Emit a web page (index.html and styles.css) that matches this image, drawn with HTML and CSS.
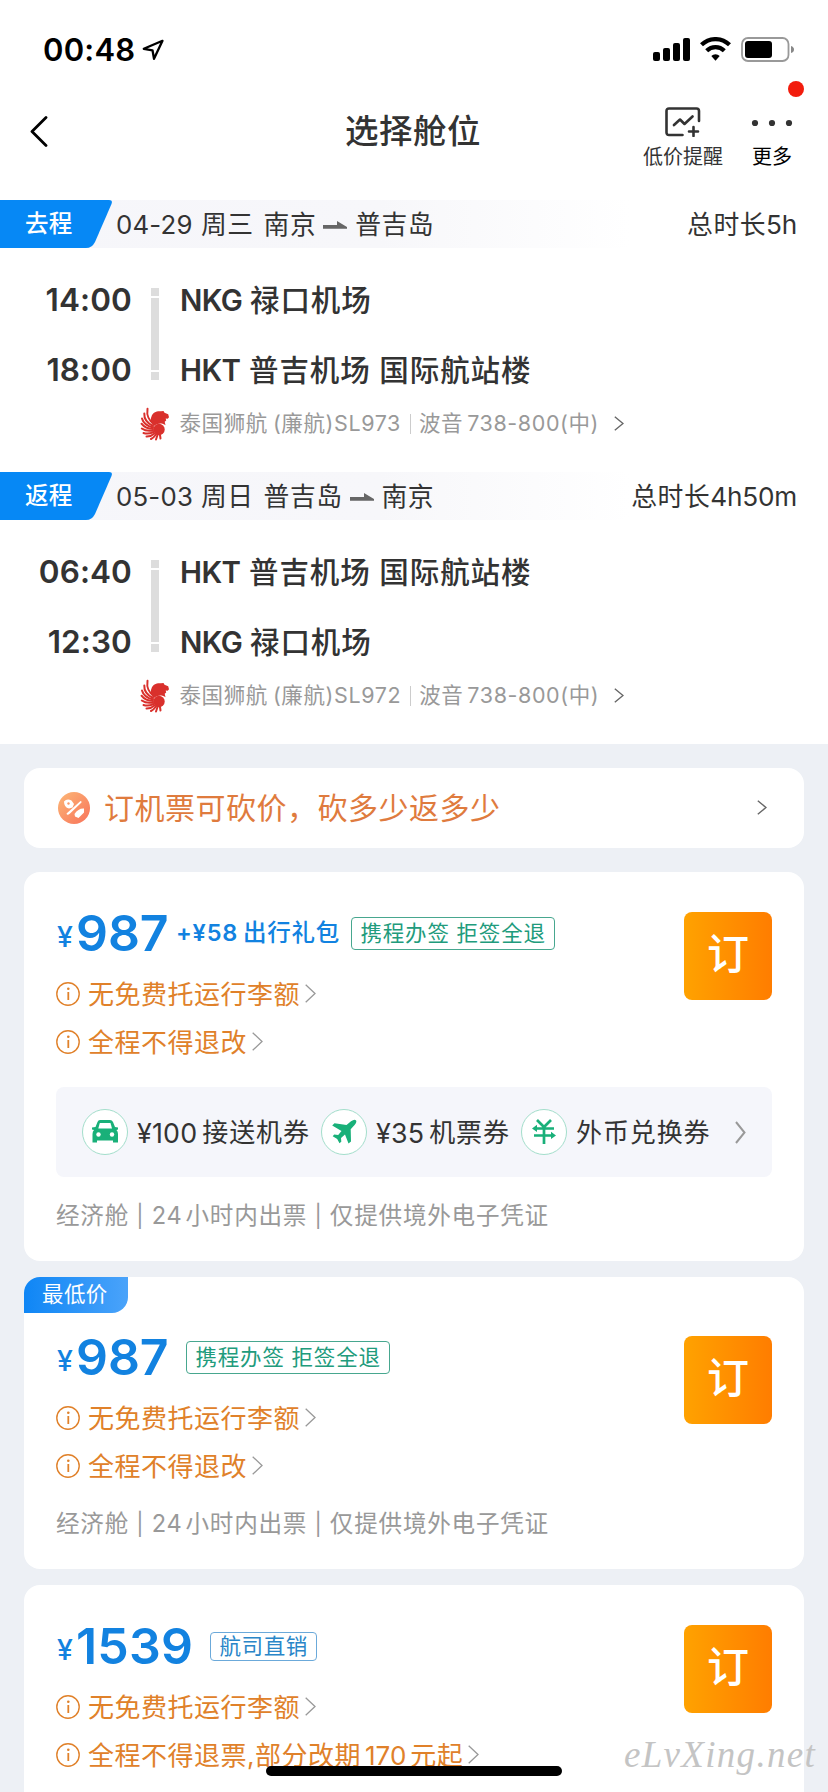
FILE: index.html
```html
<!DOCTYPE html>
<html lang="zh-CN">
<head>
<meta charset="utf-8">
<title>选择舱位</title>
<link rel="stylesheet" href="styles.css">
</head>
<body>
<svg class="defs" width="0" height="0" aria-hidden="true">
  <defs>
    <linearGradient id="peach" x1="0" y1="0" x2="1" y2="1"><stop offset="0" stop-color="#fcb877"/><stop offset="1" stop-color="#f8725a"/></linearGradient>
    <symbol id="info" viewBox="0 0 24 24"><circle cx="12" cy="12" r="11.2" fill="none" stroke="#e0812a" stroke-width="1.4"/><path d="M12.3 10v8" stroke="#e0812a" stroke-width="1.8"/><circle cx="12.3" cy="6.8" r="1.3" fill="#e0812a"/></symbol>
    <symbol id="more" viewBox="0 0 11 19"><path d="M.7.7 10 9.5.7 18.3" fill="none" stroke="#999" stroke-width="1.3"/></symbol>
    <symbol id="go" viewBox="0 0 10 15"><path d="M.8.8 9 7.5.8 14.2" fill="none" stroke="#666" stroke-width="1.4"/></symbol>
    <symbol id="arrow" viewBox="0 0 24 8"><path d="M0 4h14V0L24 6v1.8H0z" fill="#666"/></symbol>
    <symbol id="lion" viewBox="0 0 30 34">
      <g fill="none" stroke="#d9302c" stroke-width="2" stroke-linecap="round">
        <path d="M7.500 1.800C6.500 8 9 14 14 17"/><path d="M4.300 6.500C4 11 7 16 13 19"/><path d="M2 11.500C3 15.500 7 19 13 20.500"/><path d="M1.500 16.700C4 20 8 22 13 22"/><path d="M1.800 21.500C5 23.800 9 24.200 13 23.500"/><path d="M3.500 26C7 27.200 10 26.700 13.500 25"/><path d="M6.500 29.600C9.500 29.700 12 28.700 14.500 26.500"/><path d="M11 32C13 31 14.500 29.500 16 27.500"/><path d="M16 32.500 17.500 28M20.500 31.500 20 28"/>
      </g>
      <path d="M11.500 9.500C12.500 5.500 17 3.700 21 4.300l2.500-.3 1 1.700 3.700 1.500.8 3-1.300 1.500-2-.3.500 2-1.500 1.300.8 3.500c-3-2.500-8-2.500-11.500.8-3-2-4-6-2.500-9.500z" fill="#d9302c"/>
      <circle cx="19" cy="22.500" r="5.700" fill="#d9302c"/>
    </symbol>
  </defs>
</svg>
<div class="screen">
  <header class="status">
    <span class="clock">00:48</span>
    <svg class="loc" width="23" height="22" viewBox="0 0 23 22"><path d="M20.500 1.800 1.800 9.800 10.500 11.300 12 19.800z" fill="none" stroke="#000" stroke-width="2.300" stroke-linejoin="round"/></svg>
    <svg class="signals" width="142" height="26" viewBox="0 0 142 26">
      <rect x="0" y="15" width="7" height="9" rx="2"/><rect x="10" y="11" width="7" height="13" rx="2"/><rect x="20" y="6" width="7" height="18" rx="2"/><rect x="30" y="1" width="7" height="23" rx="2"/>
      <g fill="none" stroke="#000" stroke-width="4.200"><path d="M48.500 7.800a20 20 0 0 1 28 0"/><path d="M53.700 13.700a12.500 12.500 0 0 1 17.600 0"/></g><path d="M58.300 19a6 6 0 0 1 8.400 0l-4.200 4.700z"/>
      <rect x="89" y="1" width="46.500" height="23" rx="6" fill="none" stroke="#999" stroke-width="1.800"/><rect x="92" y="4" width="27" height="17" rx="3"/><path d="M138 9q3 1 3 3.500T138 16z" fill="#888"/>
    </svg>
  </header>

  <nav class="nav">
    <svg class="back" width="18" height="31" viewBox="0 0 18 31"><path d="M16 1.500 2 15.500 16 29.500" fill="none" stroke="#000" stroke-width="2.800" stroke-linecap="round" stroke-linejoin="round"/></svg>
    <h1 class="title">选择舱位</h1>
    <div class="tools">
      <div class="tool">
        <svg width="36" height="30" viewBox="0 0 36 30"><g fill="none" stroke="#333" stroke-width="2.600" stroke-linecap="round" stroke-linejoin="round"><path d="M17.500 28H4Q1.500 28 1.500 25.500V4Q1.500 1.500 4 1.500H31.500Q34 1.500 34 4V14"/><path d="M9 18 15 12.500 19.500 17 27.500 9.500M28.500 20v9M24 24.500h9"/></g></svg>
        <span>低价提醒</span>
      </div>
      <div class="tool tool-more">
        <svg width="42" height="30" viewBox="0 0 42 30"><g fill="#333"><circle cx="4" cy="16" r="3.100"/><circle cx="21" cy="16" r="3.100"/><circle cx="38" cy="16" r="3.100"/></g></svg>
        <span>更多</span>
        <i class="dot"></i>
      </div>
    </div>
  </nav>

  <section class="leg">
    <div class="leg-head">
      <div class="flag"><svg width="112" height="48" viewBox="0 0 112 48"><path d="M0 0H109Q113 0 111.500 4L95 42Q92 48 86 48H0z" fill="#0688f5"/></svg><span>去程</span></div>
      <span class="date">04-29</span><span class="w">周三</span><span class="w">南京</span><svg class="arrow" width="24" height="8"><use href="#arrow"/></svg><span>普吉岛</span>
      <span class="total">总时长<b>5h</b></span>
    </div>
    <div class="route">
      <div class="times"><span>14:00</span><span>18:00</span></div>
      <div class="track"><i></i><i></i><i></i></div>
      <div class="ports"><span><b>NKG</b>禄口机场</span><span><b class="hkt">HKT</b>普吉机场 国际航站楼</span></div>
    </div>
    <div class="plane"><svg width="30" height="34"><use href="#lion"/></svg><span>泰国狮航</span><span class="code">(廉航)SL973</span><i class="bar"></i><span>波音</span><span class="model">738-800(中)</span><svg class="go" width="10" height="15"><use href="#go"/></svg></div>
  </section>

  <section class="leg">
    <div class="leg-head">
      <div class="flag"><svg width="112" height="48" viewBox="0 0 112 48"><path d="M0 0H109Q113 0 111.500 4L95 42Q92 48 86 48H0z" fill="#0688f5"/></svg><span>返程</span></div>
      <span class="date">05-03</span><span class="w">周日</span><span class="w">普吉岛</span><svg class="arrow" width="24" height="8"><use href="#arrow"/></svg><span>南京</span>
      <span class="total">总时长<b>4h50m</b></span>
    </div>
    <div class="route">
      <div class="times"><span>06:40</span><span>12:30</span></div>
      <div class="track"><i></i><i></i><i></i></div>
      <div class="ports"><span><b class="hkt">HKT</b>普吉机场 国际航站楼</span><span><b>NKG</b>禄口机场</span></div>
    </div>
    <div class="plane"><svg width="30" height="34"><use href="#lion"/></svg><span>泰国狮航</span><span class="code">(廉航)SL972</span><i class="bar"></i><span>波音</span><span class="model">738-800(中)</span><svg class="go" width="10" height="15"><use href="#go"/></svg></div>
  </section>

  <main class="list">
    <div class="promo">
      <svg width="32" height="32" viewBox="0 0 32 32"><circle cx="16" cy="16" r="16" fill="url(#peach)"/><path d="M6 9.500Q9 6 13.500 8.500L16 12 14.500 15.500 11 16.500Q6 15.500 6 9.500zM8.500 21.500 22.500 9Q24 9 23.500 10.500L12 21.500Q9 24 8.500 21.500zM16.500 22Q20.500 16 26 16.500V20.500L20.500 26 17 24.500z" fill="#fff"/><circle cx="10.500" cy="11.500" r="1.200" fill="#f99a6a"/></svg>
      <span>订机票可砍价，砍多少返多少</span>
      <svg class="go" width="10" height="15"><use href="#go"/></svg>
    </div>

    <article class="card">
      <div class="top">
        <div class="info">
          <div class="price"><span class="yen">¥</span><span class="num">987</span><span class="extra">+¥58<em>出行礼包</em></span><span class="tag near">携程办签 拒签全退</span></div>
          <div class="warn"><svg width="24" height="24"><use href="#info"/></svg><span>无免费托运行李额</span><svg width="11" height="19"><use href="#more"/></svg></div>
          <div class="warn"><svg width="24" height="24"><use href="#info"/></svg><span>全程不得退改</span><svg width="11" height="19"><use href="#more"/></svg></div>
        </div>
        <div class="book">订</div>
      </div>
      <div class="gifts">
        <div class="gift g1"><span class="ring"><svg width="28" height="26" viewBox="0 0 28 26"><path d="M9 1H19Q21 1 22 3L24 8 27 8.500V10.500L25.500 11Q27 12.500 27 15V23.500H22V21.500H6V23.500H1.500V15Q1.500 12.500 3 11L1 10.500V8.500L4.500 8 6.500 3Q7.200 1 9 1z" fill="#19b079"/><path d="M8.800 4H19.500L21 9.500H7.300z" fill="#fff"/><circle cx="7.500" cy="15.500" r="2.200" fill="#fff"/><circle cx="21" cy="15.500" r="2.200" fill="#fff"/></svg></span><b>¥100</b><span>接送机券</span></div>
        <div class="gift g2"><span class="ring"><svg width="28" height="26" viewBox="0 0 28 26"><path d="M25.800 1.200Q27.300 2.500 24.800 5.800L20.700 10.200 21 22.500 18.500 24.500 15 15.500 11 19 11.300 22.800 9.500 24.300 7.200 20 2.700 17.200 4.200 15.600 8.200 16 11.500 12 2.200 6.500 4.500 4.300 16.500 6 21 2.200Q24.500-.2 25.800 1.200z" fill="#19b079"/></svg></span><b>¥35</b><span>机票券</span></div>
        <div class="gift g3"><span class="ring"><svg width="28" height="28" viewBox="0 0 28 28"><g fill="none" stroke="#19b079" stroke-width="2.700"><path d="M7 2 14 9 21 2M14 9V26M5 10.500H24M4 17.500H24"/></g><path d="M2 10.500 7 6.800V14zM26 17.500 21 13.800V21z" fill="#19b079"/></svg></span><span>外币兑换券</span></div>
        <svg width="11" height="23" viewBox="0 0 11 23"><path d="M1 1 9.500 11.500 1 22" fill="none" stroke="#999" stroke-width="2"/></svg>
      </div>
      <div class="foot"><span>经济舱</span><i>|</i><b>24</b><span>小时内出票</span><i>|</i><span>仅提供境外电子凭证</span></div>
    </article>

    <article class="card low">
      <div class="badge">最低价</div>
      <div class="top">
        <div class="info">
          <div class="price"><span class="yen">¥</span><span class="num">987</span><span class="tag">携程办签 拒签全退</span></div>
          <div class="warn"><svg width="24" height="24"><use href="#info"/></svg><span>无免费托运行李额</span><svg width="11" height="19"><use href="#more"/></svg></div>
          <div class="warn"><svg width="24" height="24"><use href="#info"/></svg><span>全程不得退改</span><svg width="11" height="19"><use href="#more"/></svg></div>
        </div>
        <div class="book">订</div>
      </div>
      <div class="foot"><span>经济舱</span><i>|</i><b>24</b><span>小时内出票</span><i>|</i><span>仅提供境外电子凭证</span></div>
    </article>

    <article class="card last">
      <div class="top">
        <div class="info">
          <div class="price"><span class="yen">¥</span><span class="num long">1539</span><span class="tag blue">航司直销</span></div>
          <div class="warn"><svg width="24" height="24"><use href="#info"/></svg><span>无免费托运行李额</span><svg width="11" height="19"><use href="#more"/></svg></div>
          <div class="warn"><svg width="24" height="24"><use href="#info"/></svg><span>全程不得退票,部分改期<b>170</b>元起</span><svg width="11" height="19"><use href="#more"/></svg></div>
        </div>
        <div class="book">订</div>
      </div>
    </article>
  </main>
  <div class="home"></div>
  <div class="mark">eLvXing.net</div>
</div>
</body>
</html>
```
FILE: styles.css
```css
* { box-sizing: border-box; }
html, body { margin: 0; padding: 0; }
body { font-family: Inter, "Noto Sans CJK SC", sans-serif; line-height: 1.2; color: #333; }
svg { display: block; flex: none; }
b, i, em, h1 { font-weight: inherit; font-style: normal; }
.defs { position: absolute; }
.screen { position: relative; width: 828px; height: 1792px; overflow: hidden; background: #fff; display: flex; flex-direction: column; white-space: nowrap; }

.status { height: 88px; padding: 37px 33px 0 43px; display: flex; align-items: flex-start; flex: none; }
.clock { font-size: 31px; font-weight: 600; line-height: 26px; color: #000; letter-spacing: .2px; width: 99px; }
.loc { margin-top: 2px; }
.signals { margin-left: auto; width: 142px; }

.nav { height: 112px; flex: none; display: grid; grid-template-columns: 1fr auto 1fr; align-items: start; padding: 0 31px 0 30px; }
.back { margin-top: 28px; }
.title { margin: 19px 0 0 -1px; font-size: 33.500px; line-height: 49px; font-weight: 500; letter-spacing: .5px; }
.tools { display: flex; justify-content: flex-end; gap: 26px; padding-top: 19px; }
.tool { display: flex; flex-direction: column; align-items: center; font-size: 20px; line-height: 26px; gap: 7px; position: relative; }
.tool-more { color: #000; padding: 0 4px 0 2px; }
.dot { position: absolute; right: -7px; top: -26px; width: 16px; height: 16px; border-radius: 50%; background: #f21c0d; }

.leg { height: 272px; flex: none; }
.leg-head { height: 48px; display: flex; align-items: center; padding-right: 31px; background: linear-gradient(90deg, #f6f6fa 0, #f7f7fa 380px, #fff 630px); font-size: 25.800px; letter-spacing: .5px; }
.leg-head > span { padding-top: 2px; }
.flag { width: 112px; height: 48px; display: grid; margin-right: 4px; }
.flag > * { grid-area: 1 / 1; }
.flag span { color: #fff; font-size: 23.500px; font-weight: 500; line-height: 48px; padding-left: 25px; letter-spacing: .2px; }
.date { width: 85px; letter-spacing: .2px; }
.w { margin-right: 10px; }
.w + .arrow { margin: 2px 8px 0 -3px; }
.total { margin-left: auto; }
.total b { letter-spacing: -.2px; font-size: 26.200px; }
.route { height: 132px; padding-top: 29px; display: flex; }
.times { width: 132px; display: flex; flex-direction: column; align-items: flex-end; }
.times span, .ports > span { flex: none; font-size: 31.500px; font-weight: 600; line-height: 46px; height: 70px; letter-spacing: .1px; }
.track { width: 8px; margin: 11px 21px 0 19px; display: grid; grid-template-rows: 8px 72px 8px; gap: 2px; height: 92px; }
.track i { background: #ddd; }
.ports > span { display: flex; font-size: 29.500px; line-height: 46px; font-weight: 500; letter-spacing: .9px; }
.ports b { width: 70px; font-weight: 600; letter-spacing: -.6px; }
.ports .hkt { width: 69px; }
.plane { display: flex; align-items: center; height: 34px; margin: 27px 0 0 140px; font-size: 21.500px; color: #999; letter-spacing: .6px; }
.plane > svg:first-child { margin-right: 9.500px; }
.code { margin-left: 5px; }
.bar { width: 1px; height: 20px; background: #ccc; margin: 0 8px 0 9px; }
.model { margin-left: 4px; }
.plane .go { margin-left: 15px; margin-top: -1px; }

.list { background: #edf0f5; flex: 1; padding: 24px 24px 0; }
.promo { height: 80px; background: #fff; border-radius: 16px; display: flex; align-items: center; padding: 0 37px 0 34px; font-size: 30px; letter-spacing: .5px; color: #df7b3e; gap: 14px; }
.promo .go { margin-left: auto; margin-top: -2px; }
.card { background: #fff; border-radius: 16px; margin-top: 24px; padding: 40px 32px 0; height: 389px; position: relative; }
.card + .card { margin-top: 16px; }
.low { padding-top: 59px; height: 292px; }
.last { height: 240px; }
.top { display: flex; justify-content: space-between; height: 175px; }
.low .top { height: 163px; }
.price { height: 42px; display: flex; align-items: center; color: #1282e0; }
.yen { font-size: 28.500px; font-weight: 500; width: 20px; text-align: center; margin: 9px 1px 0 -1px; }
.num { font-size: 50px; font-weight: 600; letter-spacing: -.1px; width: 110px; }
.num.long { width: 134px; letter-spacing: .2px; }
.extra { display: flex; align-items: center; font-size: 23.500px; font-weight: 600; letter-spacing: .8px; margin-left: -10px; width: 175px; }
.extra em { font-size: 23.500px; font-weight: 500; margin-left: 5px; letter-spacing: .7px; padding-top: 1px; }
.tag { border: 1.500px solid #47a78f; color: #219b7c; border-radius: 4px; height: 33px; line-height: 30px; font-size: 21.500px; letter-spacing: .8px; padding: 0 8.500px; }
.tag.blue { color: #2a86c8; border-color: #6ba9da; height: 29px; line-height: 26px; letter-spacing: .6px; }
.warn { display: flex; align-items: center; height: 48px; color: #e0812a; font-size: 26px; letter-spacing: .5px; }
.price + .warn { margin-top: 16px; }
.warn svg:first-child { margin-right: 8px; }
.warn span { padding-top: 1px; }
.warn svg:last-child { margin: -2px 0 0 5px; }
.warn b { font-size: 26px; padding: 0 4px; letter-spacing: 0; }
.book { width: 88px; height: 88px; border-radius: 8px; background: linear-gradient(90deg, #ffa200, #ff7d00); color: #fff; font-size: 42px; font-weight: 500; line-height: 84px; text-align: center; }
.gifts { height: 90px; background: #f5f6fb; border-radius: 8px; display: flex; align-items: center; padding: 0 26px; font-size: 26px; letter-spacing: .9px; }
.gift { display: flex; align-items: center; }
.gift > b, .gift > span:last-child { padding-top: 2px; }
.g1 { width: 239px; }
.g2 { width: 200px; }
.g3 { width: 214px; }
.ring { width: 46px; height: 46px; border: 1.500px solid #a3decb; border-radius: 50%; background: #fff; display: grid; place-items: center; margin-right: 9px; }
.gift b { margin-right: 5px; letter-spacing: .2px; font-size: 26.800px; }
.foot { display: flex; align-items: center; height: 32px; margin-top: 23px; font-size: 23.600px; color: #999; letter-spacing: .75px; }
.low .foot { margin-top: 9px; }
.foot i { font-size: 22px; margin: 0 7.300px; }
.foot b { margin-right: 3px; }
.badge { position: absolute; left: 0; top: 0; width: 104px; height: 36px; border-radius: 16px 0 16px 0; background: linear-gradient(90deg, #0f86f5, #4aa3fa); color: #fff; font-size: 21.500px; letter-spacing: .4px; line-height: 35px; padding-left: 18px; }
.home { position: absolute; left: 266px; top: 1766px; width: 296px; height: 10px; border-radius: 5px; background: #000; }
.mark { position: absolute; left: 624px; top: 1732px; font: italic 37px/46px "Liberation Serif", serif; letter-spacing: 1.300px; color: #c4c4c4; }
```
